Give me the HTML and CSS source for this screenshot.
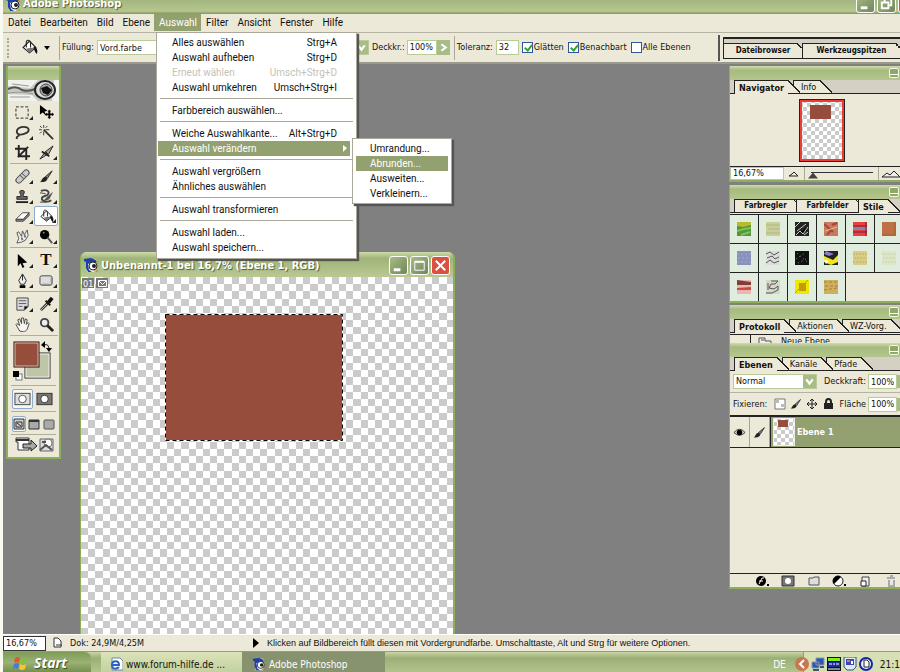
FILE: index.html
```html
<!DOCTYPE html>
<html lang="de">
<head>
<meta charset="utf-8">
<title>Adobe Photoshop</title>
<link rel="stylesheet" href="styles.css">
</head>
<body>
<svg class="defs" aria-hidden="true">
  <defs>
    <pattern id="checker" width="43" height="43" patternUnits="userSpaceOnUse">
      <rect width="43" height="43" fill="#fff"/>
      <path fill="#cbcbcb" fill-rule="evenodd" d="M7 0h7v43h-7zM22 0h7v43h-7zM36 0h7v43h-7zM0 0h43v7H0zM0 14h43v8H0zM0 29h43v7H0zM0 0h43v43H0z"/>
    </pattern>
    <pattern id="checker-small" width="8" height="8" patternUnits="userSpaceOnUse">
      <rect width="8" height="8" fill="#fff"/>
      <path fill="#cbcbcb" d="M4 0h4v4H4zM0 4h4v4H0z"/>
    </pattern>
    <symbol id="eye-logo" viewBox="0 0 16 16">
      <path fill="#e8f0fa" d="M3 2h10v13H4z"/>
      <path fill="#1c3fa8" d="M1 2l7-1 5 2v4L9 5 5 7 6 13l3 2H5L3 11V5L1 4z"/>
      <circle cx="10" cy="9" r="4" fill="#fff" stroke="#222"/><circle cx="11" cy="9" r="2" fill="#222"/>
      <path stroke="#c3712b" d="M11 14h4M13 4l2 2"/>
    </symbol>
    <symbol id="bucket" viewBox="0 0 16 16">
      <path fill="#fff" stroke="#222" d="M2 8l6-6 6 6-6 5z"/><path fill="#777" d="M5 9l8-1-5 5z"/>
      <path fill="none" stroke="#222" d="M5 8V3c0-3 4-2 4 1v4"/><path fill="#111" d="M12 7c3 1 4 3 3 7-2-1-2-3-3-5z"/>
    </symbol>
    <symbol id="brush" viewBox="0 0 16 16">
      <path fill="#888" stroke="#222" d="M14 2L7 8l2 2z"/><path fill="#222" d="M7 8l2 3c-2 3-4 3-8 3 2-1 2-5 6-6z"/>
    </symbol>
    <symbol id="minimize" viewBox="0 0 18 18"><path fill="#fff" d="M4 12h7v3H4z"/></symbol>
    <symbol id="cross" viewBox="0 0 18 18"><path stroke="#fff" stroke-width="2" d="M4 4l10 10M14 4L4 14"/></symbol>
  </defs>
</svg>

<header class="app-title">
  <div class="title-inner">
    <svg class="logo"><use href="#eye-logo"/></svg>
    <h1>Adobe Photoshop</h1>
    <button class="win-btn" aria-label="Minimieren"><svg viewBox="0 0 18 18"><use href="#minimize"/></svg></button>
    <button class="win-btn" aria-label="Wiederherstellen"><svg viewBox="0 0 18 18"><path fill="none" stroke="#fff" stroke-width="2" d="M4 8h7v6H4zM7 7V4h7v7h-2"/></svg></button>
    <button class="win-btn close" aria-label="Schließen"><svg><use href="#cross"/></svg></button>
  </div>
</header>

<nav class="menubar">
  <button>Datei</button><button>Bearbeiten</button><button>Bild</button><button>Ebene</button>
  <div class="menu-anchor">
    <button class="open">Auswahl</button>
    <ul class="menu main-menu">
      <li><button>Alles auswählen<span>Strg+A</span></button></li>
      <li><button>Auswahl aufheben<span>Strg+D</span></button></li>
      <li><button disabled>Erneut wählen<span>Umsch+Strg+D</span></button></li>
      <li><button>Auswahl umkehren<span>Umsch+Strg+I</span></button></li>
      <li class="sep"></li>
      <li><button>Farbbereich auswählen...</button></li>
      <li class="sep"></li>
      <li><button>Weiche Auswahlkante...<span>Alt+Strg+D</span></button></li>
      <li class="has-sub"><button class="active">Auswahl verändern<svg class="sub-arrow" viewBox="0 0 4 7"><path fill="#fff" d="M0 0l4 3-4 4z"/></svg></button>
        <ul class="menu sub-menu">
          <li><button>Umrandung...</button></li>
          <li><button class="active">Abrunden...</button></li>
          <li><button>Ausweiten...</button></li>
          <li><button>Verkleinern...</button></li>
        </ul>
      </li>
      <li class="sep"></li>
      <li><button>Auswahl vergrößern</button></li>
      <li><button>Ähnliches auswählen</button></li>
      <li class="sep"></li>
      <li><button>Auswahl transformieren</button></li>
      <li class="sep"></li>
      <li><button>Auswahl laden...</button></li>
      <li><button>Auswahl speichern...</button></li>
    </ul>
  </div>
  <button>Filter</button><button>Ansicht</button><button>Fenster</button><button>Hilfe</button>
</nav>

<section class="options">
  <span class="grip"></span>
  <button class="tool-preset" aria-label="Füllwerkzeug"><svg class="bucket-lg"><use href="#bucket"/></svg><svg class="caret" viewBox="0 0 6 4"><path d="M0 0h6L3 4z"/></svg></button>
  <span class="divider"></span>
  <label for="fill">Füllung:</label>
  <span class="select fill-select"><select id="fill"><option>Vord.farbe</option></select></span>
  <span class="select mode-select"><select aria-label="Modus"><option></option></select><svg class="chev" viewBox="0 0 12 12"><path d="M3 4l3 4 3-4"/></svg></span>
  <label for="opacity">Deckkr.:</label>
  <span class="combo"><input id="opacity" value="100%"><button class="step" aria-label="Deckkraft einstellen"><svg viewBox="0 0 12 12"><path d="M4 3l4 3-4 3"/></svg></button></span>
  <span class="divider"></span>
  <label for="tol">Toleranz:</label>
  <input id="tol" class="tol" value="32">
  <label class="check"><input type="checkbox" checked>Glätten</label>
  <label class="check"><input type="checkbox" checked>Benachbart</label>
  <label class="check"><input type="checkbox">Alle Ebenen</label>
  <div class="well">
    <div class="well-tabs"><button>Dateibrowser</button><button>Werkzeugspitzen</button></div>
  </div>
</section>

<main class="workspace">
  <aside class="toolbox">
    <div class="bar"></div>
    <svg class="eye-banner" viewBox="0 0 51 21" preserveAspectRatio="none">
      <rect width="51" height="21" fill="#c9c9c2"/><path fill="#f0f0ec" d="M0 0h30L22 8 0 6zM0 14l24 1 6 6H0zM46 0h5v21h-7z"/>
      <path fill="none" stroke="#555" stroke-width="2" d="M0 9q8-4 14 1 6 2 13-1"/><path fill="none" stroke="#999" d="M0 13q16-2 25 1M2 17h20M4 4l17 2"/>
      <ellipse cx="37" cy="10" rx="10" ry="9" fill="#ddd" stroke="#222" stroke-width="2"/><ellipse cx="38" cy="10" rx="6" ry="6" fill="#aaa" stroke="#444"/><path fill="#111" d="M33 8l6-2 5 4-4 5-5-2z"/>
    </svg>
    <div class="tools">
      <button class="more" aria-label="Auswahlrechteck"><svg viewBox="0 0 16 16"><path fill="none" stroke="#222" stroke-dasharray="3 2" d="M1 2h13v12H1z"/></svg></button>
      <button aria-label="Verschieben"><svg viewBox="0 0 16 16"><path d="M1 0l8 6-3 1 1 4-3-3-3 2zM11 5l2 2h-1v2h2V8l2 2-2 2v-1h-2v2h1l-2 2-2-2h1v-2H8v1l-2-2 2-2v1h2V7H9z"/></svg></button>
      <button class="more" aria-label="Lasso"><svg viewBox="0 0 16 16"><path fill="none" stroke="#333" stroke-width="2" d="M4 10C0 8 2 2 9 2s7 5 2 7-7 1-7 1 1 1-1 2-1 2-1 3"/></svg></button>
      <button aria-label="Zauberstab"><svg viewBox="0 0 16 16"><path stroke="#333" fill="none" d="M5 0v3M5 7v4M0 5h3M7 5h4M1 1l2 2M9 1L7 3M3 7L1 9"/><path stroke="#333" stroke-width="2" d="M5 5l10 10"/></svg></button>
      <button aria-label="Freistellen"><svg viewBox="0 0 16 16"><path stroke="#222" stroke-width="2" fill="none" d="M4 0v12h12M0 4h12v12M3 13L14 2"/></svg></button>
      <button class="more" aria-label="Slice"><svg viewBox="0 0 16 16"><path fill="#aaa" stroke="#222" d="M15 1L7 7l3 3zM7 7L1 15l8-5z"/><path stroke="#222" stroke-width="2" d="M3 7l8 5"/></svg></button>
      <hr>
      <button class="more" aria-label="Reparaturpinsel"><svg viewBox="0 0 16 16"><path stroke="#444" stroke-width="7" stroke-linecap="round" d="M4 12l8-8"/><path stroke="#ccc" stroke-width="5" stroke-linecap="round" d="M4 12l8-8"/><path stroke="#555" stroke-width="5" stroke-dasharray="1 2 1 8" d="M7 9l4-4"/></svg></button>
      <button class="more" aria-label="Pinsel"><svg><use href="#brush"/></svg></button>
      <button class="more" aria-label="Stempel"><svg viewBox="0 0 16 16"><path fill="#666" stroke="#222" d="M6 8c1-2-1-3-1-5s5-2 5 0-2 3-1 5h4v3H2V8z"/><path stroke="#222" stroke-width="2" d="M1 14h13"/></svg></button>
      <button class="more" aria-label="Protokollpinsel"><svg viewBox="0 0 16 16"><path fill="none" stroke="#444" stroke-width="2" d="M2 2c6-2 9 0 8 3S3 7 3 10s6 5 10 2"/><path fill="#555" d="M15 3l-6 5-6 6 8-3z"/><path stroke="#444" d="M1 4l6 1M1 14h7"/></svg></button>
      <button class="more" aria-label="Radiergummi"><svg viewBox="0 0 16 16"><path fill="#fff" stroke="#444" d="M1 11l7-7h7l-6 7z"/><path fill="#888" stroke="#444" d="M1 11h8l6-7v3l-6 6H1z"/></svg></button>
      <button class="more selected" aria-label="Füllwerkzeug"><svg><use href="#bucket"/></svg></button>
      <button class="more" aria-label="Wischfinger"><svg viewBox="0 0 16 16"><path fill="#eee" stroke="#555" d="M2 15l2-5-2-6 2-1 3 5 1-6 2 4 3-5 1 6-3 5-4 2z"/><path stroke="#777" stroke-width="2" d="M7 9l1 3M10 6l1 3"/></svg></button>
      <button class="more" aria-label="Abwedler"><svg viewBox="0 0 16 16"><circle cx="6" cy="6" r="5"/><path stroke="#555" stroke-width="2" d="M9 9l5 6"/><circle cx="5" cy="4" r="1" fill="#888"/></svg></button>
      <hr>
      <button class="more" aria-label="Pfadauswahl"><svg viewBox="0 0 16 16"><path d="M3 1l10 9-5 1 2 4-2 1-2-5-3 3z"/></svg></button>
      <button class="more letter" aria-label="Text">T</button>
      <button class="more" aria-label="Zeichenstift"><svg viewBox="0 0 16 16"><path fill="#eee" stroke="#222" d="M8 1l4 7-2 4H6L4 8z"/><path stroke="#222" d="M8 2v6"/><path d="M5 13h6v3H5z"/></svg></button>
      <button class="more" aria-label="Form"><svg viewBox="0 0 16 16"><rect x="1" y="3" width="13" height="10" rx="2" fill="#ddd" stroke="#444"/><path stroke="#888" d="M3 12h9M13 5v6"/></svg></button>
      <hr>
      <button class="more" aria-label="Anmerkungen"><svg viewBox="0 0 16 16"><path fill="#ddd" stroke="#444" d="M2 1h12v9l-4 4H2z"/><path stroke="#555" d="M4 4h8M4 7h8M4 10h4M10 14v-4h4"/></svg></button>
      <button class="more" aria-label="Pipette"><svg viewBox="0 0 16 16"><path stroke="#333" stroke-width="3" d="M2 14l7-7"/><path stroke="#ccc" d="M2 14l7-7"/><path stroke="#111" stroke-width="4" d="M10 6l4-5"/><path stroke="#111" stroke-width="2" d="M7 4l5 5"/></svg></button>
      <button aria-label="Hand"><svg viewBox="0 0 16 16"><path fill="#f7f7f0" stroke="#444" d="M5 15L1 8l1-1 3 2-2-6 2-1 2 5V1h2l1 6 1-5 2 1-1 5 2-2 1 1-2 6-3 3z"/></svg></button>
      <button aria-label="Zoom"><svg viewBox="0 0 16 16"><circle cx="6" cy="6" r="4" fill="#eee" stroke="#444" stroke-width="2"/><path stroke="#222" stroke-width="3" d="M9 9l6 6"/></svg></button>
      <hr>
    </div>
    <svg class="swatches" viewBox="0 0 51 46">
      <rect x="17" y="15" width="25" height="25" fill="#bfc6a8" stroke="#222"/><rect x="18" y="16" width="23" height="23" fill="none" stroke="#eee"/>
      <rect x="6" y="4" width="25" height="25" fill="#964d3b" stroke="#111"/><rect x="7" y="5" width="23" height="23" fill="none" stroke="#d6b9ab"/>
      <path fill="none" stroke="#222" d="M36 7q5-2 5 5"/><path d="M33 7l4-4v7zM38 10h6l-3 4z"/>
      <rect x="8" y="36" width="6" height="6" fill="#fff" stroke="#777"/><rect x="5" y="33" width="6" height="6"/>
    </svg>
    <hr>
    <div class="modes">
      <button class="on" aria-label="Standardmodus"><svg viewBox="0 0 18 14"><rect x="1" y="1" width="16" height="12" fill="#ddd" stroke="#444"/><circle cx="9" cy="7" r="4" fill="#fff" stroke="#555"/></svg></button>
      <button aria-label="Maskierungsmodus"><svg viewBox="0 0 18 14"><rect x="1" y="1" width="16" height="12" fill="#777" stroke="#333"/><circle cx="9" cy="7" r="4" fill="#fff" stroke="#333"/></svg></button>
    </div>
    <hr>
    <div class="modes screens">
      <button class="on" aria-label="Fenster"><svg viewBox="0 0 12 12"><path fill="#ccc" stroke="#333" d="M1 1h10v10H1zM3 4h6v5H3zM4 5l4 3"/></svg></button>
      <button aria-label="Vollbild mit Menü"><svg viewBox="0 0 12 12"><path fill="#aaa" stroke="#333" d="M1 2h10v9H1z"/><path stroke="#333" stroke-width="2" d="M1 3h10"/></svg></button>
      <button aria-label="Vollbild"><svg viewBox="0 0 12 12"><rect x="1" y="2" width="10" height="9" rx="1" fill="#aaa" stroke="#555"/></svg></button>
    </div>
    <hr>
    <button class="jump" aria-label="ImageReady"><svg viewBox="0 0 40 16"><path fill="#ddd" stroke="#666" d="M26 2h13v12H26z"/><circle cx="34" cy="6" r="4" fill="#fff" stroke="#777"/><path stroke="#555" stroke-width="2" fill="none" d="M26 13l6-5 6 5M28 5h4"/><path fill="#fff" stroke="#333" d="M2 1h13v12H4V5H2z"/><path stroke="#333" stroke-width="2" d="M2 3h13"/><path fill="#aaa" stroke="#222" d="M9 7h8V3l6 6-6 5v-3H9z"/></svg></button>
  </aside>

  <section class="document">
    <header>
      <svg class="logo"><use href="#eye-logo"/></svg>
      <h2>Unbenannt-1 bei 16,7% (Ebene 1, RGB)</h2>
      <button class="win-btn" aria-label="Minimieren"><svg viewBox="0 0 18 18"><use href="#minimize"/></svg></button>
      <button class="win-btn" aria-label="Maximieren"><svg viewBox="0 0 18 18"><path fill="none" stroke="#fff" d="M4 5h10v9H4z"/><path stroke="#fff" stroke-width="2" d="M4 5h10"/></svg></button>
      <button class="win-btn close" aria-label="Schließen"><svg><use href="#cross"/></svg></button>
    </header>
    <svg class="canvas">
      <rect width="100%" height="100%" fill="url(#checker)"/>
      <rect x="84" y="37" width="177" height="126" fill="#964d3b"/>
      <path fill="none" stroke="#fff" d="M84 37h177v126H84z" transform="translate(.5 .5)"/>
      <path fill="none" stroke="#000" stroke-dasharray="4 3" d="M84 37h177v126H84z" transform="translate(.5 .5)"/>
      <rect x="1" y="1" width="12" height="10" fill="#777"/><text x="2" y="10" class="tag">01</text>
      <rect x="15" y="1" width="12" height="10" fill="#777"/><path fill="none" stroke="#fff" d="M17 3h8v6h-8zl4 4 4-4" transform="translate(.5 .5)"/>
    </svg>
  </section>

  <aside class="palettes">
    <section class="palette">
      <div class="bar"><button aria-label="Navigator minimieren"></button></div>
      <div class="tabs"><button class="tab active">Navigator</button><button class="tab">Info</button></div>
      <div class="nav-body"><svg class="nav-thumb" viewBox="0 0 46 63"><rect width="46" height="63" fill="#222"/><rect x="1" y="1" width="44" height="61" fill="#ef3b33"/><rect x="3" y="3" width="40" height="57" fill="url(#checker-small)"/><rect x="11" y="6" width="21" height="14" fill="#964d3b"/></svg></div>
      <div class="nav-foot">
        <input aria-label="Zoomstufe" value="16,67%">
        <svg class="mount" viewBox="0 0 10 6"><path fill="#eee" stroke="#222" d="M0 5l3-2 2-2 4 4z"/></svg>
        <input class="range" type="range" min="0" max="100" value="0" aria-label="Zoom">
        <svg class="mount large" viewBox="0 0 18 8"><path fill="#eee" stroke="#222" d="M0 7l5-4 3 2 4-4 6 6z"/></svg>
      </div>
    </section>

    <section class="palette styles">
      <div class="bar"><button aria-label="Stile minimieren"></button></div>
      <div class="tabs boxed"><button class="tab">Farbregler</button><button class="tab">Farbfelder</button><button class="tab active">Stile</button></div>
      <div class="style-grid">
        <button aria-label="Stil 1"><svg viewBox="0 0 14 14"><path fill="#4f9a36" d="M0 0h14v14H0z"/><path fill="#b6bd28" d="M0 0h14v3L6 5 0 4z"/><path stroke="#86c05c" stroke-width="2" d="M0 9l7-2 7-1M4 13l9-3"/></svg></button>
        <button aria-label="Stil 2"><svg viewBox="0 0 14 14"><path fill="#c9cf9b" d="M0 0h14v14H0z"/><path stroke="#b3b47d" d="M0 3h14M2 7h11M0 11h14"/></svg></button>
        <button aria-label="Stil 3"><svg viewBox="0 0 14 14"><path fill="#222" d="M0 0h14v14H0z"/><path stroke="#ccc" d="M0 5l5-5M2 9l9-7M1 13l4-4 3 3 5-7M9 13l4-3"/></svg></button>
        <button aria-label="Stil 4"><svg viewBox="0 0 14 14"><path fill="#c67b61" d="M0 0h14v14H0z"/><path stroke="#a7452f" stroke-width="2" d="M0 2l9 8M8 3l5-2M3 13l4-5"/><path stroke="#e6b69a" d="M1 9l12-4"/></svg></button>
        <button aria-label="Stil 5"><svg viewBox="0 0 14 14"><path fill="#e8403a" d="M0 0h14v14H0z"/><path fill="#7b8ba5" d="M0 5h14v3H0z"/><path stroke="#7b184f" d="M0 4h14M0 10h14M13 0v14"/></svg></button>
        <button aria-label="Stil 6"><svg viewBox="0 0 14 14"><path fill="#bd7145" d="M0 0h14v14H0z"/><path fill="none" stroke="#a65f2f" d="M0 13h13V0"/></svg></button>
        <button aria-label="Stil 7"><svg viewBox="0 0 14 14"><path fill="#8b91bd" d="M0 0h14v14H0z"/><path stroke="#9faec0" stroke-dasharray="2 2" d="M0 3h14M1 7h13M0 11h14"/></svg></button>
        <button aria-label="Stil 8"><svg viewBox="0 0 14 14"><path fill="#ddd" d="M0 0h14v14H0z"/><path fill="none" stroke="#555" d="M0 3l4-2 4 3 5-3M1 7l5-2 3 3 4-2M0 12l4-3 4 3 5-2"/></svg></button>
        <button aria-label="Stil 9"><svg viewBox="0 0 14 14"><path fill="#111" d="M0 0h14v14H0z"/><path stroke="#888" stroke-dasharray="1 3" d="M2 2l10 9M1 8l9-6M3 12l10-5"/></svg></button>
        <button aria-label="Stil 10"><svg viewBox="0 0 14 14"><path fill="#222" d="M0 0h14v14H0z"/><path fill="#8c7acb" d="M2 0l8 3-5 2-5-2z"/><path fill="#f0e51e" d="M0 5l9 4 5-5v7L7 14 0 11z"/><path fill="#fff" d="M0 9l5 1-3 3z"/></svg></button>
        <button aria-label="Stil 11"><svg viewBox="0 0 14 14"><path fill="#d9cd85" d="M0 0h14v14H0z"/><path stroke="#bcae65" stroke-dasharray="2 1" d="M0 3h14M1 7h13M0 11h14"/></svg></button>
        <button aria-label="Stil 12"><svg viewBox="0 0 14 14"><path fill="#dde7c8" d="M0 0h14v14H0z"/><path stroke="#c9d2a0" stroke-dasharray="2 1" d="M0 3h14M1 7h13M0 11h14"/></svg></button>
        <button aria-label="Stil 13"><svg viewBox="0 0 14 14"><path fill="#eab7ad" d="M0 0h14v14H0z"/><path fill="#813c3c" d="M0 0l14 2v3H0z"/><path fill="#c94a4a" d="M0 8l14-1v3H0z"/></svg></button>
        <button aria-label="Stil 14"><svg viewBox="0 0 14 14"><path fill="#d5d8ca" d="M0 0h14v14H0z"/><path fill="none" stroke="#555" d="M5 1h7L9 4H5l-2 4 5 1 4-3v4l-6 3H0M2 3v7"/></svg></button>
        <button aria-label="Stil 15"><svg viewBox="0 0 14 14"><path fill="#ece800" d="M0 0h14v14H0z"/><path fill="#c29a0c" d="M4 3h7v8H4z"/><path stroke="#bea200" d="M0 13L13 0"/></svg></button>
        <button aria-label="Stil 16"><svg viewBox="0 0 14 14"><path fill="#c9b25c" d="M0 0h14v14H0z"/><path stroke="#c76b48" stroke-dasharray="3 2" d="M0 2h14M1 6h13M0 10l13-2"/></svg></button>
        <span class="blank"></span>
      </div>
    </section>

    <section class="palette history">
      <div class="bar"><button aria-label="Protokoll minimieren"></button></div>
      <div class="tabs"><button class="tab active">Protokoll</button><button class="tab">Aktionen</button><button class="tab">WZ-Vorg.</button></div>
      <div class="history-row"><span class="source"></span><svg viewBox="0 0 14 14"><path fill="#eee" stroke="#555" d="M1 3h6v3h6v7H1zM3 5h3M3 9h8"/></svg>Neue Ebene</div>
    </section>

    <section class="palette layers">
      <div class="bar"><button aria-label="Ebenen minimieren"></button></div>
      <div class="tabs"><button class="tab active">Ebenen</button><button class="tab">Kanäle</button><button class="tab">Pfade</button></div>
      <div class="layer-row first">
        <span class="select blend"><select aria-label="Füllmethode"><option>Normal</option></select><svg class="chev" viewBox="0 0 12 12"><path d="M3 4l3 4 3-4"/></svg></span>
        <label for="lop">Deckkraft:</label><input id="lop" value="100%"><span class="edge"></span>
      </div>
      <div class="layer-row">
        <span class="fix">Fixieren:</span>
        <button aria-label="Transparente Pixel fixieren"><svg viewBox="0 0 12 12"><path fill="#fff" stroke="#777" d="M1 1h10v10H1z"/><path fill="#bbb" d="M2 2h3v3H2zM7 6h3v3H7z"/></svg></button>
        <button aria-label="Bildpixel fixieren"><svg><use href="#brush"/></svg></button>
        <button aria-label="Position fixieren"><svg viewBox="0 0 12 12"><path stroke="#222" fill="none" d="M6 1v10M1 6h10M4 3l2-2 2 2M4 9l2 2 2-2M3 4L1 6l2 2M9 4l2 2-2 2"/></svg></button>
        <button aria-label="Alles fixieren"><svg viewBox="0 0 12 12"><path fill="none" stroke="#222" stroke-width="2" d="M4 6V4c0-4 5-4 5 0v2"/><path fill="#222" d="M2 5h9v6H2z"/></svg></button>
        <label for="area">Fläche</label><input id="area" value="100%"><span class="edge"></span>
      </div>
      <div class="layer">
        <button aria-label="Ebene einblenden"><svg viewBox="0 0 14 14"><path fill="#ddd" stroke="#333" d="M1 7q6-7 12 0-6 6-12 0z"/><circle cx="7" cy="7" r="3"/></svg></button>
        <button aria-label="Ebene aktiv"><svg><use href="#brush"/></svg></button>
        <div class="layer-name"><svg viewBox="0 0 22 28"><rect width="22" height="28" fill="#eee"/><rect x="1" y="1" width="20" height="26" fill="url(#checker-small)"/><rect x="5" y="2" width="10" height="7" fill="#964d3b"/></svg><strong>Ebene 1</strong></div>
      </div>
      <div class="layer-space"></div>
      <div class="layer-foot">
        <button aria-label="Ebenenstil"><svg viewBox="0 0 14 12"><circle cx="6" cy="6" r="5"/><path stroke="#fff" fill="none" d="M4 9l3-6h2M4 6h4"/><path d="M12 9h2v2h-2z"/></svg></button>
        <button aria-label="Ebenenmaske"><svg viewBox="0 0 14 12"><path fill="#777" stroke="#333" d="M1 1h12v10H1z"/><circle cx="7" cy="6" r="3" fill="#fff"/></svg></button>
        <button aria-label="Neues Set"><svg viewBox="0 0 14 12"><path fill="#ddd" stroke="#555" d="M2 3h4l1-1h5v8H2z"/></svg></button>
        <button aria-label="Einstellungsebene"><svg viewBox="0 0 14 12"><circle cx="6" cy="6" r="5" fill="#fff" stroke="#222"/><path d="M2 9L9 2a5 5 0 0 0-7 7zM12 9h2v2h-2z"/></svg></button>
        <button aria-label="Neue Ebene"><svg viewBox="0 0 14 12"><path fill="#eee" stroke="#444" d="M4 2h7v9H4z"/><path fill="#fff" stroke="#222" d="M3 6h5v5H3z"/></svg></button>
        <button aria-label="Ebene löschen"><svg viewBox="0 0 14 12"><path fill="none" stroke="#aaa" stroke-width="2" d="M3 3h8M5 5v6h5V5M6 1h3"/></svg></button>
      </div>
    </section>
  </aside>
</main>

<footer class="status">
  <input aria-label="Zoomstufe" value="16,67%">
  <svg viewBox="0 0 10 12"><path fill="#fff" stroke="#333" d="M1 1h4l3 3v6H1z"/><path stroke="#333" d="M3 8h6"/></svg>
  <span class="dok">Dok: 24,9M/4,25M</span>
  <svg class="play" viewBox="0 0 6 10"><path d="M0 0l6 5-6 5z"/></svg>
  <span class="hint">Klicken auf Bildbereich füllt diesen mit Vordergrundfarbe. Umschalttaste, Alt und Strg für weitere Optionen.</span>
</footer>

<footer class="taskbar">
  <button class="start"><svg viewBox="0 0 16 16"><path fill="#e2572b" d="M2 3q3-2 5 0l-1 5q-3-2-5 0z"/><path fill="#7fc23c" d="M8 3q3 2 6 0l-1 5q-3 2-6 0z"/><path fill="#3f7be0" d="M1 9q3-2 5 0l-1 5q-3-2-5 0z"/><path fill="#f5c62c" d="M7 9q3 2 6 0l-1 5q-3 2-6 0z"/></svg>Start</button>
  <button class="task"><svg viewBox="0 0 14 14"><path fill="#fff" stroke="#789" d="M3 1h8l3 3v9H3z"/><path fill="none" stroke="#2b62c4" stroke-width="2" d="M3 8h7c0-5-7-5-7 0s5 4 7 2"/></svg>www.forum-hilfe.de ...</button>
  <button class="task current"><svg><use href="#eye-logo"/></svg>Adobe Photoshop</button>
  <span class="lang">DE</span>
  <div class="tray">
    <svg viewBox="0 0 14 14"><circle cx="7" cy="7" r="7" fill="#c87850"/><path fill="none" stroke="#fff" stroke-width="2" d="M9 3L5 7l4 4"/></svg>
    <svg viewBox="0 0 14 14"><path fill="#2f55b5" stroke="#89a" d="M5 1h8v7H5zM1 5h7v6H1z"/><path stroke="#456" stroke-width="2" d="M2 13h6M9 10h4"/></svg>
    <svg viewBox="0 0 14 14"><path fill="#111" d="M0 0h14v14H0z"/><path fill="#80f01c" d="M1 1h12v3H1z"/><path fill="#1b2d9b" d="M1 5h12v5H1z"/><path stroke="#fff" d="M2 7h3M6 7h2M9 7h3M1 12h12"/></svg>
    <svg viewBox="0 0 14 14"><path fill="#dfe9f4" stroke="#357" d="M1 0h12v10l-3 3H4l-3-3z"/><path fill="#3947b3" d="M3 2h8v6H3z"/><path fill="#e56a6a" d="M4 3h3v2H4z"/><path fill="#fff" d="M8 4h2v3H8z"/></svg>
    <svg viewBox="0 0 14 14"><circle cx="7" cy="7" r="6" fill="#eef" stroke="#16279b" stroke-width="2"/><path fill="#fff" stroke="#222" d="M5 3h3l2 2v5H5z"/></svg>
    <time>21:1</time>
  </div>
</footer>
</body>
</html>
```
FILE: styles.css
```css
* { box-sizing: border-box; }
:root {
  --face: #ece9d8;
  --olive: #93a070;
  --green: #a6bb80;
  --frame: #8fae5c;
  --line: #222;
  --ui: "DejaVu Sans Condensed", "DejaVu Sans", sans-serif;
  --menu: Roboto, "Liberation Sans", sans-serif;
}
body {
  margin: 0; padding-left: 3px; height: 100vh; overflow: hidden;
  display: flex; flex-direction: column;
  background: #f8faf2; color: #111; font: 10px/15px var(--ui);
}
button { margin: 0; padding: 0; border: 0; background: none; color: inherit; font: inherit; white-space: nowrap; }
input, select { min-width: 0; margin: 0; font: inherit; color: inherit; border: 1px solid #b9cb96; background: #fff; border-radius: 0; padding: 0 2px; }
svg { display: block; flex: none; }
ul { list-style: none; margin: 0; padding: 0; }
hr { margin: 1px 3px 2px; border: 0; border-top: 1px solid #aeb09c; }
h1, h2 { margin: 0; color: #fff; text-shadow: 1px 1px 1px #4c5a35; flex: 1; white-space: nowrap; }
.defs { position: absolute; width: 0; height: 0; }

/* Title bars */
.app-title { height: 14px; flex: none; display: flex; align-items: flex-end; overflow: hidden; background: linear-gradient(#a3b680, #b6c78e 80%, #7f955c); }
.title-inner { flex: 1; height: 20px; display: flex; align-items: center; gap: 2px; padding: 0 0 1px 2px; }
.title-inner h1 { font: bold 11px/14px var(--ui); }
.title-inner .close { margin-right: -17px; }
.logo { width: 16px; height: 16px; }
.win-btn { width: 19px; height: 19px; flex: none; border: 1px solid #fff; border-radius: 3px; background: linear-gradient(135deg, #a9bb86, #6f875a); }
.win-btn svg { width: 100%; height: 100%; }
.win-btn.close { background: #dd5040; }

/* Menus */
.menubar { display: flex; height: 18px; flex: none; background: var(--face); position: relative; z-index: 5; font-family: var(--menu); }
.menubar > button, .open { padding: 0 4px 0 5px; height: 17px; }
.open { background: var(--olive); color: #fff; display: block; }
.menu-anchor { position: relative; }
.menu { position: absolute; background: #fff; border: 1px solid #aca899; box-shadow: 2px 2px 1px #555; }
.main-menu { top: 18px; left: 2px; width: 201px; padding: 2px 1px 3px; }
.menu button { display: flex; width: 100%; height: 15px; padding: 0 13px 0 14px; text-align: left; }
.main-menu > li { padding-right: 5px; }
.menu span { margin-left: auto; }
.menu .active { background: var(--olive); color: #fff; }
.menu button:disabled { color: #c4c2b4; }
.menu .sep { height: 8px; padding: 3px 2px 0; }
.menu .sep::before { content: ""; display: block; border-top: 1px solid #aca899; }
.has-sub { position: relative; }
.sub-arrow { width: 4px; height: 7px; margin: 4px -10px 0 auto; }
.sub-menu { top: -3px; left: 194px; width: 100px; padding: 2px 3px; }

/* Options bar */
.options { height: 32px; flex: none; display: flex; align-items: center; font-size: 9px; background: var(--face); border-top: 1px solid #b5b3a5; border-bottom: 2px solid #9a9a8c; white-space: nowrap; }
.grip { width: 3px; height: 20px; margin-left: 4px; border-left: 2px dotted #aaa894; }
.tool-preset { display: flex; align-items: center; gap: 6px; margin: 0 9px 0 11px; }
.bucket-lg { width: 17px; height: 17px; }
.caret { width: 6px; height: 4px; }
.divider { width: 1px; height: 24px; background: #aaa894; margin-right: 2px; }
.select { position: relative; display: block; }
.select select { appearance: none; width: 100%; height: 15px; padding: 0 2px; display: block; }
.chev { position: absolute; right: 1px; top: 1px; width: 13px; height: 13px; background: #a9bc87; fill: none; stroke: #fff; stroke-width: 2; pointer-events: none; }
.fill-select { width: 80px; margin-left: 3px; }
.mode-select { width: 84px; margin: 0 3px 0 108px; }
.combo { display: flex; margin: 0 4px 0 2px; }
.combo input { width: 30px; height: 15px; }
.step { width: 13px; height: 15px; background: #a9bc87; }
.step svg { width: 13px; height: 13px; fill: none; stroke: #fff; stroke-width: 2; }
.tol { width: 23px; height: 15px; margin: 0 3px; }
.check { display: flex; align-items: center; gap: 1px; margin-right: 4px; }
.check input { appearance: none; width: 11px; height: 11px; border: 1px solid #31559c; padding: 0; }
.check input:checked::before { content: ""; display: block; width: 3px; height: 6px; margin: 0 0 0 3px; border: solid #36a036; border-width: 0 2px 2px 0; transform: rotate(40deg); }
.well { width: 182px; height: 26px; margin-left: auto; padding: 2px 0 2px 3px; border-left: 2px solid #555; }
.well-tabs { height: 22px; display: flex; align-items: flex-end; border: 1px solid var(--line); border-width: 2px 0 1px 1px; background: #d4d0c4; }
.well-tabs button { position: relative; width: 78px; height: 15px; border-top: 1px solid var(--line); background: var(--face); font: bold 8px/13px var(--ui); }
.well-tabs button + button { flex: 1; border-left: 1px solid var(--line); }
.well-tabs button::after { content: ""; position: absolute; top: -1px; right: 0; width: 5px; height: 5px; background: linear-gradient(to top right, var(--face) 40%, var(--line) 40% 60%, #d4d0c4 60%); }

/* Workspace: floating windows */
.workspace { flex: 1; min-height: 0; position: relative; background: #808080; overflow: hidden; }
.bar { height: 14px; background: linear-gradient(#d0dcaa, var(--green) 30%, #b4c68c); display: flex; justify-content: flex-end; align-items: center; padding-right: 1px; }
.bar button { width: 10px; height: 10px; border: 1px solid #f4f8e4; border-radius: 2px; background: linear-gradient(#8fa76b 60%, #fff 60% 80%, #8fa76b 80%); }
.toolbox { position: absolute; top: 2px; left: 3px; width: 55px; border: 2px solid var(--frame); border-top-width: 0; background: var(--face); }
.eye-banner { width: 100%; height: 21px; margin-bottom: 1px; }
.tools { display: grid; grid-template-columns: 24px 24px; padding: 0 2px; }
.tools hr { grid-column: 1 / -1; width: 100%; margin: 1px 0 2px; }
.tools button { height: 20px; display: grid; place-items: center; position: relative; }
.tools svg { width: 15px; height: 15px; }
.more::after { content: ""; position: absolute; right: 1px; bottom: 2px; border: 2px solid #222; border-top-color: transparent; border-left-color: transparent; }
.selected { background: #fff; border: 1px solid #8eabc9; border-radius: 2px; }
.letter { font: bold 17px/18px "Liberation Serif", serif; }
.swatches { width: 51px; height: 46px; }
.modes { display: flex; justify-content: space-around; align-items: center; height: 22px; padding: 0 3px; }
.modes button { padding: 2px 1px; border: 1px solid transparent; border-radius: 2px; }
.modes svg { width: 17px; height: 14px; }
.modes .on { border-color: #8eabc9; background: #f7f8f2; }
.screens { height: 19px; }
.screens button { padding: 1px 0; }
.screens svg { width: 12px; height: 12px; }
.jump { display: block; margin: 1px auto 4px; }
.jump svg { width: 40px; height: 16px; }

.document { position: absolute; left: 77px; top: 188px; bottom: 0; width: 375px; display: flex; flex-direction: column; border: solid var(--frame); border-width: 0 2px 0 1px; border-radius: 6px 6px 0 0; overflow: hidden; }
.document header { height: 25px; flex: none; display: flex; align-items: center; gap: 2px; padding: 1px 3px 0 2px; background: linear-gradient(#d0dcaa, #9fb479 25%, #b9c992); }
.document h2 { padding-top: 2px; font: bold 11px/16px var(--ui); }
.canvas { width: 100%; flex: 1; min-height: 0; }
.tag { font: 9px var(--ui); fill: #fff; }

/* Palettes */
.palettes { position: absolute; right: 0; top: 2px; width: 171px; font-size: 9px; line-height: 13px; display: flex; flex-direction: column; gap: 2px; }
.palette { border: solid var(--frame); border-width: 0 0 2px 1px; background: var(--face); overflow: hidden; }
.styles { margin-top: 1px; }
.tabs { display: flex; align-items: flex-end; height: 14px; padding-left: 4px; background: #d4d0c4; border-bottom: 1px solid var(--line); }
.tab { position: relative; height: 13px; line-height: 12px; padding: 0 4px 0 7px; margin-right: 5px; border: solid var(--line); border-width: 1px 0 0 1px; background: var(--face); }
.tab::after { content: ""; position: absolute; z-index: 1; top: -1px; left: 100%; width: 12px; height: 13px; background: linear-gradient(to top right, var(--face) 46%, var(--line) 46% 54%, transparent 54%); }
.tab.active { z-index: 1; height: 14px; margin-bottom: -1px; padding-left: 4px; font-weight: bold; }
.boxed .tab:not(.active) { width: 62px; padding: 0; margin: 0; text-align: center; font-weight: bold; font-size: 8px; }
.boxed .tab:not(.active)::after { width: 3px; height: 3px; left: auto; right: 0; }
.nav-body { height: 72px; padding-top: 5px; display: flex; justify-content: center; }
.nav-thumb { width: 46px; height: 63px; margin-left: 14px; }
.nav-foot { height: 14px; display: flex; align-items: center; border-top: 1px solid var(--line); }
.nav-foot input:first-child { width: 54px; height: 13px; }
.mount { width: 10px; height: 6px; margin: 0 5px; }
.mount.large { width: 18px; height: 8px; margin: 0; }
.range { appearance: none; flex: 1; height: 13px; padding: 0 3px; border: solid #aaa894; border-width: 0 1px; background: linear-gradient(#333, #333) center 5px / 62px 1px no-repeat; margin-right: 3px; }
.range::-webkit-slider-thumb { appearance: none; width: 10px; height: 6px; margin-top: 4px; background: #444; clip-path: polygon(50% 0, 100% 100%, 0 100%); }
.style-grid { display: grid; grid-template-columns: repeat(6, 28px); gap: 1px; padding: 1px 0 0; background: var(--line); margin-top: 1px; }
.style-grid button { height: 28px; background: #e0ecdd; display: grid; place-items: center; }
.style-grid svg { width: 14px; height: 14px; }
.blank { grid-column: span 2; background: var(--face); }
.history { height: 38px; border-bottom-width: 0; }
.history-row { display: flex; align-items: center; height: 14px; border-top: 1px solid var(--line); margin-top: 1px; }
.source { width: 21px; height: 14px; border-right: 1px solid var(--line); margin-right: 7px; }
.history-row svg { width: 14px; height: 14px; margin-right: 9px; }
.layers { margin-top: -2px; }
.layer-row { display: flex; align-items: center; height: 22px; padding-left: 3px; }
.layer-row.first { border-bottom: 1px solid #b5b3a5; }
.layer-row input { width: 29px; height: 15px; margin-left: 2px; }
.layer-row label { margin-left: auto; }
.layer-row button { width: 12px; height: 12px; margin-left: 4px; }
.layer-row button svg { width: 12px; height: 12px; }
.fix { margin-right: 3px; }
.blend { width: 84px; }
.edge { width: 3px; height: 13px; background: #a9bc87; }
.layer { display: flex; height: 33px; border: solid var(--line); border-width: 2px 0 1px; }
.layer > button { width: 20px; border-right: 1px solid #9bb073; display: grid; place-items: center; }
.layer > button svg { width: 13px; height: 13px; }
.layer-name { flex: 1; display: flex; align-items: center; gap: 2px; padding-left: 2px; border-left: 1px solid var(--line); background: var(--olive); color: #fff; }
.layer-name svg { width: 22px; height: 28px; }
.layer-space { height: 125px; }
.layer-foot { height: 14px; display: flex; justify-content: space-between; align-items: center; padding: 0 2px 0 25px; border-top: 1px solid var(--line); }
.layer-foot svg { width: 14px; height: 12px; }

/* Status bar and taskbar */
.status { height: 17px; flex: none; display: flex; align-items: center; background: var(--face); font-size: 9px; white-space: nowrap; border-top: 1px solid #fff; }
.status input { width: 43px; height: 15px; border-color: #333; }
.status > svg { width: 10px; height: 12px; margin: 0 7px; }
.dok { width: 183px; }
.hint { font-family: "Liberation Sans", sans-serif; }
.status .play { width: 6px; height: 10px; margin: 0 8px 0 0; }
.taskbar { height: 21px; flex: none; display: flex; align-items: flex-start; overflow: hidden; background: linear-gradient(#c9d5a4, #9bb076 30%, #b2c48c); border-top: 1px solid #8ea56a; white-space: nowrap; }
.start { width: 88px; height: 26px; display: flex; gap: 5px; padding: 3px 0 0 10px; margin-right: 10px; border-radius: 0 6px 6px 0; background: linear-gradient(#7e9c58, #9ab273 40%, #5c7c3b); color: #fff; font: italic bold 14px/16px "Open Sans", sans-serif; text-shadow: 1px 1px 1px #35471f; }
.start svg { width: 16px; height: 16px; }
.task { width: 141px; height: 26px; display: flex; gap: 3px; padding: 5px 0 0 8px; background: linear-gradient(#dbe3b9, #bccb98); text-align: left; }
.task svg { width: 14px; height: 14px; }
.current { width: 143px; padding-left: 10px; background: #87936e; color: #fff; }
.lang { margin-left: auto; padding: 5px 9px 0 0; color: #fff; }
.tray { height: 26px; display: flex; gap: 2px; padding-top: 5px; background: linear-gradient(90deg, transparent 8px, #8ea56a 8px 9px, #d7dfb5 9px); }
.tray svg { width: 14px; height: 14px; }
.tray time { margin-left: 5px; }
```
